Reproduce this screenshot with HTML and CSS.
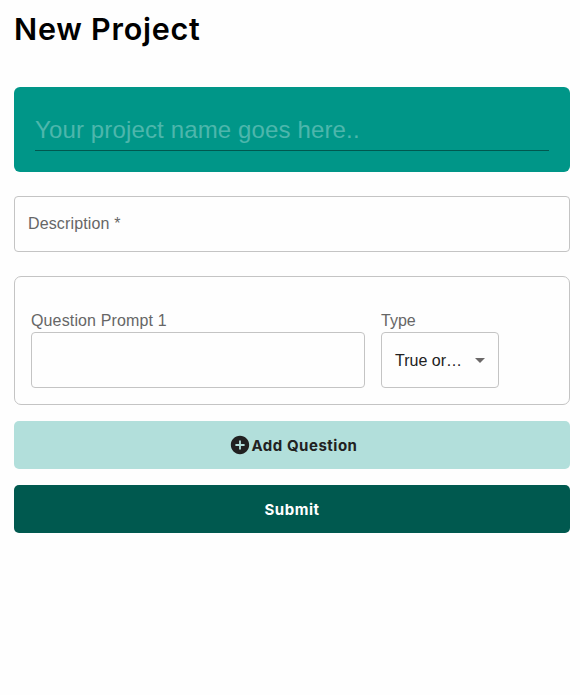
FILE: index.html
```html
<!DOCTYPE html>
<html lang="en">
<head>
<meta charset="utf-8">
<title>New Project</title>
<link rel="stylesheet" href="styles.css">
</head>
<body>
<main class="page">
  <h1 class="title">New Project</h1>
  <form class="form">
    <div class="name-card"><div class="name-field">Your project name goes here..</div></div>
    <div class="description">Description <span class="required">*</span></div>
    <section class="question">
      <div class="prompt">
        <label class="label">Question Prompt 1</label>
        <div class="box"></div>
      </div>
      <div class="type">
        <label class="label type-label">Type</label>
        <div class="box select"><span>True or…</span>
          <svg class="arrow" viewBox="0 0 24 24"><path d="M7 10l5 5 5-5z"/></svg>
        </div>
      </div>
    </section>
    <button type="button" class="button add">
      <svg class="plus" viewBox="0 0 24 24"><path d="M12 2C6.480 2 2 6.480 2 12s4.480 10 10 10 10-4.480 10-10S17.520 2 12 2zm5 11h-4v4h-2v-4H7v-2h4V7h2v4h4v2z"/></svg>
      <span class="caption">Add Question</span>
    </button>
    <button type="button" class="button submit"><span class="caption">Submit</span></button>
  </form>
</main>
</body>
</html>
```
FILE: styles.css
```css
* { box-sizing: border-box; }
body {
  margin: 0;
  background: #fefefe;
  color: #212121;
  font: 16px/23px "Liberation Sans", Arial, sans-serif;
}
.page { padding: 10px 10px 0 14px; }
.title {
  margin: 0 0 39px;
  color: #000;
  font: 600 30.5px/38px Inter, sans-serif;
  letter-spacing: 0.75px;
}
.name-card {
  height: 85px;
  padding: 24px 21px 21px;
  border-radius: 6px;
  background: #009688;
}
.name-field {
  height: 40px;
  border-bottom: 1px solid #00584f;
  color: #4db6ac;
  font-size: 24px;
  line-height: 38px;
  letter-spacing: 0.14px;
}
.description {
  height: 56px;
  margin: 24px 0;
  padding: 15px 13px;
  border: 1px solid #c4c4c4;
  border-radius: 4px;
  color: #666;
  letter-spacing: 0.14px;
}
.question {
  display: flex;
  gap: 16px;
  height: 129px;
  padding: 32px 16px 16px;
  border: 1px solid #c4c4c4;
  border-radius: 7px;
}
.prompt { width: 334px; }
.type { width: 118px; }
.label { display: block; color: #666; letter-spacing: 0.14px; }
.type-label { letter-spacing: 0; }
.box {
  height: 56px;
  border: 1px solid #c4c4c4;
  border-radius: 4px;
}
.select {
  display: flex;
  align-items: center;
  justify-content: space-between;
  padding: 0 6px 0 13px;
}
.arrow { width: 24px; height: 24px; fill: #6b6868; }
.button {
  display: flex;
  align-items: center;
  justify-content: center;
  gap: 1px;
  width: 100%;
  height: 48px;
  margin: 16px 0 0;
  padding: 0;
  border: 0;
  border-radius: 5px;
  font: 700 15px/24px Inter, sans-serif;
  letter-spacing: 0.52px;
}
.caption { padding-top: 2px; }
.add { padding-left: 2px; background: #b2dfdb; color: #212121; }
.submit { background: #00594f; color: #fff; }
.plus { width: 22px; height: 22px; fill: #212121; }
```
